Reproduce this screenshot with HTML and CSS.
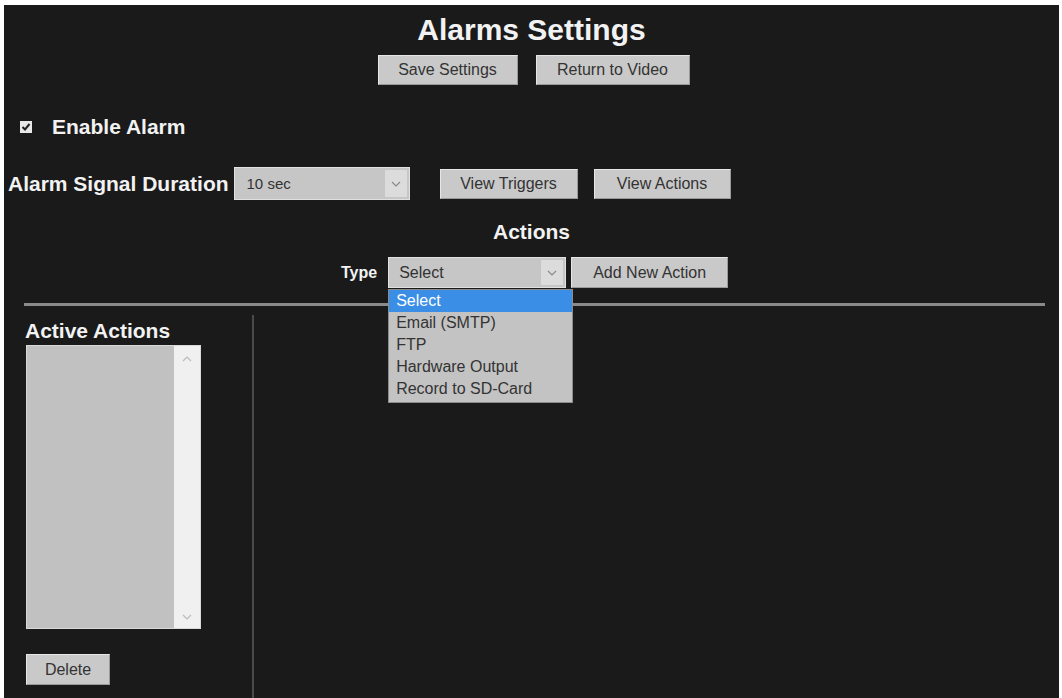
FILE: index.html
```
<!DOCTYPE html>
<html lang="en">
<head>
    <meta charset="UTF-8">
    <meta name="viewport" content="width=device-width, initial-scale=1.0">
    <title>Alarms Settings</title>
    <link rel="stylesheet" href="styles.css">
</head>
<body>
    <div class="page">
        <h1>Alarms Settings</h1>
        <div class="top-buttons">
            <button class="btn save-btn">Save Settings</button>
            <button class="btn return-btn">Return to Video</button>
        </div>

        <div class="enable-row">
            <span class="check">
                <svg width="12" height="12" viewBox="0 0 12 12"><path d="M2.5 6 L5 8.5 L9.5 3" fill="none" stroke="#222" stroke-width="2"/></svg>
            </span>
            <span class="label">Enable Alarm</span>
        </div>

        <div class="duration-row">
            <span class="label">Alarm Signal Duration</span>
            <div class="select duration-select">
                <span class="select-text">10 sec</span>
                <span class="select-arrow">
                    <svg width="10" height="6" viewBox="0 0 10 6"><path d="M1 1 L5 5 L9 1" fill="none" stroke="#8a8a8a" stroke-width="1.2"/></svg>
                </span>
            </div>
            <button class="btn triggers-btn">View Triggers</button>
            <button class="btn actions-btn">View Actions</button>
        </div>

        <h2 class="actions-title">Actions</h2>

        <div class="type-row">
            <span class="type-label">Type</span>
            <div class="type-wrap">
                <div class="select type-select">
                    <span class="select-text">Select</span>
                    <span class="select-arrow">
                        <svg width="10" height="6" viewBox="0 0 10 6"><path d="M1 1 L5 5 L9 1" fill="none" stroke="#8a8a8a" stroke-width="1.2"/></svg>
                    </span>
                </div>
                <ul class="dropdown">
                    <li class="selected">Select</li>
                    <li>Email (SMTP)</li>
                    <li>FTP</li>
                    <li>Hardware Output</li>
                    <li>Record to SD-Card</li>
                </ul>
            </div>
            <button class="btn add-btn">Add New Action</button>
        </div>

        <div class="divider"></div>

        <div class="bottom">
            <div class="side">
                <h3>Active Actions</h3>
                <div class="listbox">
                    <div class="list-area"></div>
                    <div class="scrollbar">
                        <svg width="10" height="6" viewBox="0 0 10 6"><path d="M1 5 L5 1 L9 5" fill="none" stroke="#bbb" stroke-width="1.2"/></svg>
                        <svg width="10" height="6" viewBox="0 0 10 6"><path d="M1 1 L5 5 L9 1" fill="none" stroke="#bbb" stroke-width="1.2"/></svg>
                    </div>
                </div>
                <button class="btn delete-btn">Delete</button>
            </div>
            <div class="detail"></div>
        </div>
    </div>
</body>
</html>
```

FILE: styles.css
```
body {
    margin: 0;
    background: #ffffff;
    padding: 5px 3px 0 4px;
    font-family: "Liberation Sans", Arial, sans-serif;
    overflow: hidden;
}
.page {
    background: #1a1a1a;
    height: 693px;
    padding: 0 4px;
    color: #f2f2f2;
    overflow: hidden;
}
h1 {
    margin: 0;
    padding-top: 8px;
    font-size: 30px;
    line-height: 34px;
    text-align: center;
}
.top-buttons {
    display: flex;
    justify-content: center;
    gap: 18px;
    margin-top: 8px;
    padding-left: 4px;
}
.btn {
    height: 30px;
    padding: 0;
    background: #c9c9c9;
    border: 1px solid #e6e6e6;
    border-right-color: #9a9a9a;
    border-bottom-color: #9a9a9a;
    color: #333;
    font-family: "Liberation Sans", Arial, sans-serif;
    font-size: 16px;
    cursor: pointer;
}
.save-btn {
    width: 140px;
}
.return-btn {
    width: 154px;
}
.label {
    font-size: 21px;
    font-weight: bold;
}
.enable-row {
    display: flex;
    align-items: center;
    height: 24px;
    margin-top: 30px;
    padding-left: 12px;
}
.check {
    width: 12px;
    height: 12px;
    background: #e8e8e8;
    display: flex;
    margin-right: 20px;
}
.duration-row {
    display: flex;
    align-items: center;
    height: 33px;
    margin-top: 28px;
}
.select {
    display: flex;
    align-items: center;
    background: #c6c6c6;
    border: 1px solid #e0e0e0;
    color: #333;
    box-sizing: border-box;
}
.select-text {
    flex: 1;
    padding-left: 12px;
}
.select-arrow {
    width: 22px;
    align-self: stretch;
    background: #dcdcdc;
    display: flex;
    align-items: center;
    justify-content: center;
    margin: 2px;
}
.duration-select {
    width: 176px;
    height: 33px;
    margin-left: 5px;
    font-size: 15px;
}
.triggers-btn {
    width: 138px;
    margin-left: 30px;
    margin-right: 16px;
}
.actions-btn {
    width: 137px;
}
.actions-title {
    margin: 20px 0 0;
    font-size: 21px;
    line-height: 24px;
    text-align: center;
}
.type-row {
    display: flex;
    align-items: center;
    height: 31px;
    margin-top: 13px;
    padding-left: 333px;
}
.type-label {
    font-size: 16px;
    font-weight: bold;
    margin-right: 11px;
}
.type-wrap {
    position: relative;
}
.type-select {
    width: 178px;
    height: 31px;
    font-size: 16px;
}
.type-select .select-text {
    padding-left: 10px;
}
.dropdown {
    position: absolute;
    top: 32px;
    left: 0;
    width: 183px;
    margin: 0;
    padding: 0 0 2px;
    list-style: none;
    background: #c3c3c3;
    border: 1px solid #8c8c8c;
    color: #333;
    font-size: 16px;
    z-index: 2;
}
.dropdown li {
    height: 22px;
    line-height: 22px;
    padding-left: 7px;
}
.dropdown li.selected {
    background: #3a8ee6;
    color: #fff;
}
.add-btn {
    width: 157px;
    height: 31px;
    margin-left: 5px;
}
.divider {
    height: 3px;
    background: #8a8a8a;
    margin: 15px 10px 0 16px;
}
.bottom {
    display: flex;
    height: 400px;
    margin-top: 9px;
}
.side {
    width: 246px;
    border-right: 2px solid #4a4a4a;
    padding-left: 17px;
    box-sizing: border-box;
}
.side h3 {
    margin: 4px 0 0;
    font-size: 21px;
    line-height: 24px;
}
.listbox {
    display: flex;
    width: 175px;
    height: 284px;
    margin-top: 2px;
    margin-left: 1px;
    border: 1px solid #d8d8d8;
    box-sizing: border-box;
}
.list-area {
    flex: 1;
    background: #c1c1c1;
}
.scrollbar {
    width: 26px;
    background: #f0f0f0;
    display: flex;
    flex-direction: column;
    justify-content: space-between;
    align-items: center;
    padding: 10px 0 8px;
}
.delete-btn {
    margin-top: 25px;
    margin-left: 1px;
    width: 84px;
    height: 31px;
}
.detail {
    flex: 1;
}
```
